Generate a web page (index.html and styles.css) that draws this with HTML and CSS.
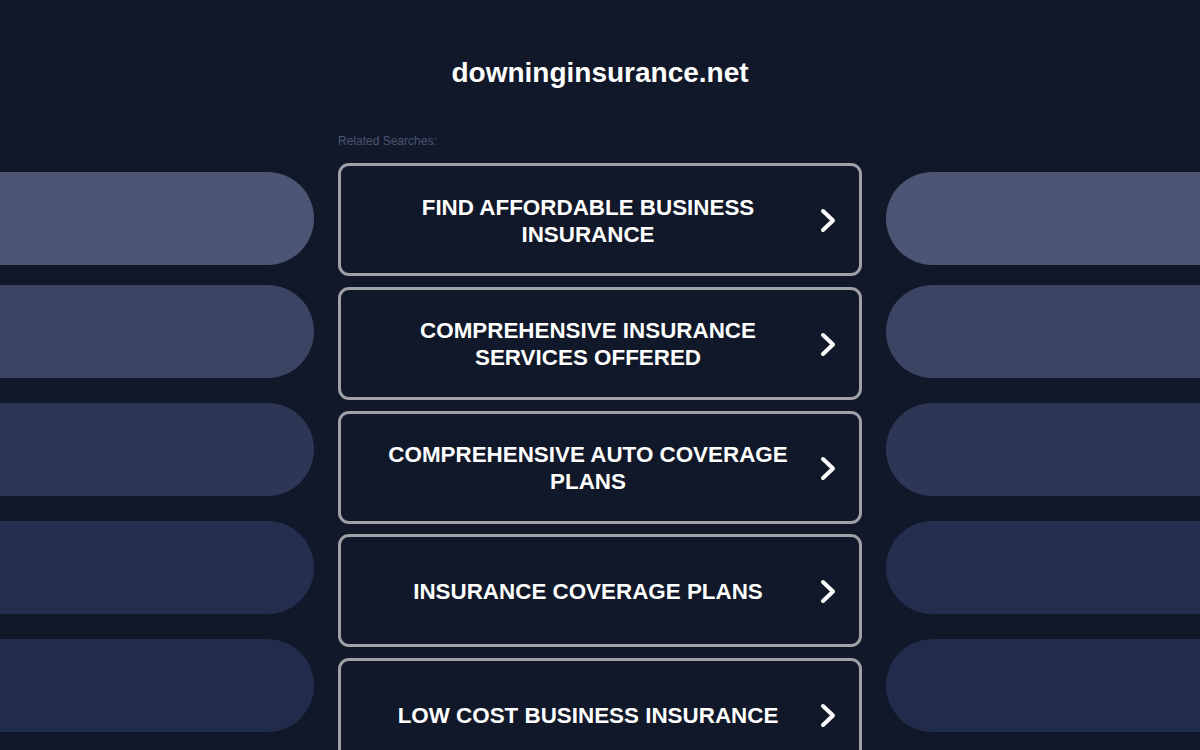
FILE: index.html
```html
<!DOCTYPE html>
<html lang="en">
<head>
<meta charset="utf-8">
<title>downinginsurance.net</title>
<link rel="stylesheet" href="styles.css">
</head>
<body>
<h1 class="domain">downinginsurance.net</h1>
<div class="layout">
  <div class="side side-left">
    <div class="pill p1"></div>
    <div class="pill p2"></div>
    <div class="pill p3"></div>
    <div class="pill p4"></div>
    <div class="pill p5"></div>
  </div>
  <div class="center">
    <div class="label">Related Searches:</div>
    <a class="result" href="#"><span class="result-text">FIND AFFORDABLE BUSINESS INSURANCE</span><svg class="chev" viewBox="0 0 16 25"><path d="M3 3 L13 12.5 L3 22"/></svg></a>
    <a class="result" href="#"><span class="result-text">COMPREHENSIVE INSURANCE SERVICES OFFERED</span><svg class="chev" viewBox="0 0 16 25"><path d="M3 3 L13 12.5 L3 22"/></svg></a>
    <a class="result" href="#"><span class="result-text">COMPREHENSIVE AUTO COVERAGE PLANS</span><svg class="chev" viewBox="0 0 16 25"><path d="M3 3 L13 12.5 L3 22"/></svg></a>
    <a class="result" href="#"><span class="result-text">INSURANCE COVERAGE PLANS</span><svg class="chev" viewBox="0 0 16 25"><path d="M3 3 L13 12.5 L3 22"/></svg></a>
    <a class="result" href="#"><span class="result-text">LOW COST BUSINESS INSURANCE</span><svg class="chev" viewBox="0 0 16 25"><path d="M3 3 L13 12.5 L3 22"/></svg></a>
  </div>
  <div class="side side-right">
    <div class="pill p1"></div>
    <div class="pill p2"></div>
    <div class="pill p3"></div>
    <div class="pill p4"></div>
    <div class="pill p5"></div>
  </div>
</div>
</body>
</html>
```
FILE: styles.css
```css
html, body {
  margin: 0;
  padding: 0;
  background: #111829;
  height: 100%;
  overflow: hidden;
}
body {
  font-family: "Liberation Sans", Arial, sans-serif;
  color: #ffffff;
}
.domain {
  margin: 0;
  padding-top: 56px;
  font-size: 28px;
  line-height: 34px;
  font-weight: bold;
  text-align: center;
  color: #ffffff;
}
.layout {
  display: grid;
  grid-template-columns: 314px 524px 314px;
  column-gap: 24px;
  margin-top: 44px;
}
.side {
  display: flex;
  flex-direction: column;
  padding-top: 38px;
}
.pill {
  height: 93px;
  margin-bottom: 25px;
}
.pill.p1 { margin-bottom: 20px; background: #4c5674; }
.pill.p2 { background: #3b4563; }
.pill.p3 { background: #2d3655; }
.pill.p4 { background: #242e4f; }
.pill.p5 { background: #212b4b; }
.side-left .pill { border-radius: 0 47px 47px 0; }
.side-right .pill { border-radius: 47px 0 0 47px; }
.center {
  display: flex;
  flex-direction: column;
}
.label {
  font-size: 12px;
  line-height: 14px;
  color: #4b5570;
  margin-bottom: 15px;
}
.result {
  box-sizing: border-box;
  height: 113px;
  margin-bottom: 10.75px;
  border: 3px solid #9fa1a7;
  border-radius: 11px;
  display: flex;
  align-items: center;
  padding: 2px 23px 0 30px;
  text-decoration: none;
  color: #ffffff;
}
.result-text {
  flex: 1;
  margin-right: 15px;
  text-align: center;
  font-size: 22.4px;
  line-height: 27px;
  font-weight: bold;
}
.chev {
  width: 16px;
  height: 25px;
  flex: none;
}
.chev path {
  fill: none;
  stroke: #ffffff;
  stroke-width: 4;
  stroke-linecap: round;
  stroke-linejoin: round;
}
```
